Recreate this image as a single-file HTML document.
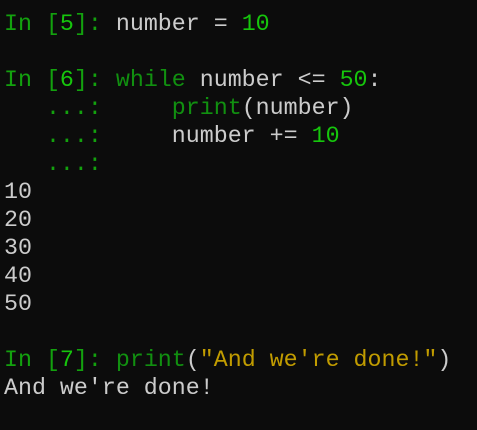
<!DOCTYPE html>
<html><head><meta charset="utf-8"><style>
html,body{margin:0;padding:0;background:#0c0c0c;width:477px;height:430px;overflow:hidden}
pre{margin:0;position:absolute;left:4px;top:10px;font-family:"Liberation Mono",monospace;font-size:23.3px;line-height:28px;color:#cccccc;letter-spacing:0}
.p{color:#13a10e}.d{color:#16c60c}.k{color:#119010}.n{color:#16c60c}.s{color:#c19c00}
</style></head><body><pre><span class="p">In [</span><span class="d">5</span><span class="p">]:</span> number = <span class="n">10</span>

<span class="p">In [</span><span class="d">6</span><span class="p">]:</span> <span class="k">while</span> number &lt;= <span class="n">50</span>:
<span class="p">   ...:</span>     <span class="k">print</span>(number)
<span class="p">   ...:</span>     number += <span class="n">10</span>
<span class="p">   ...:</span>
10
20
30
40
50

<span class="p">In [</span><span class="d">7</span><span class="p">]:</span> <span class="k">print</span>(<span class="s">"And we're done!"</span>)
And we're done!</pre></body></html>
